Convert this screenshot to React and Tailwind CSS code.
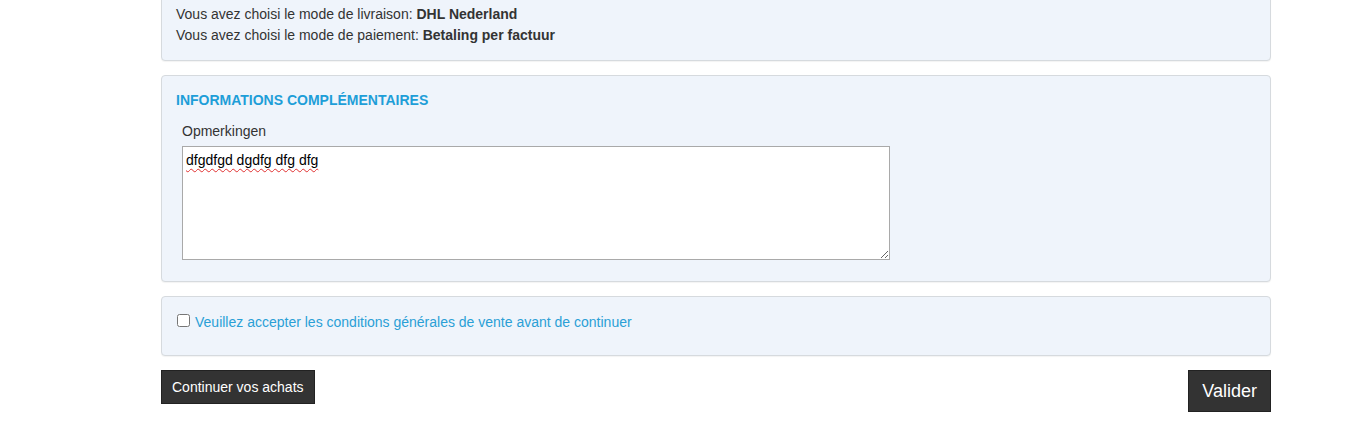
export default function App() {
    return (
        <div className="w-full h-[435px] bg-white overflow-hidden font-['Liberation_Sans',Arial,sans-serif] text-[14px] text-[#333]">
            <div className="ml-[161px] w-[1110px] flex flex-col">
                {/* order summary, top cut off */}
                <div className="-mt-[12px] bg-[#eff4fb] border border-[#d6dade] rounded-[4px] shadow-[0_1px_1px_rgba(0,0,0,0.05)] px-[14px] pt-[15px] pb-[14px] leading-[21px]">
                    <p>Vous avez choisi le mode de livraison: <b>DHL Nederland</b></p>
                    <p>Vous avez choisi le mode de paiement: <b>Betaling per factuur</b></p>
                </div>

                <div className="mt-[14px] bg-[#eff4fb] border border-[#d6dade] rounded-[4px] shadow-[0_1px_1px_rgba(0,0,0,0.05)] px-[14px] pt-[15px] pb-[21px]">
                    <h3 className="text-[14px] leading-[18px] font-bold text-[#1e9ed8] uppercase">Informations complémentaires</h3>
                    <div className="pl-[6px] mt-[12px]">
                        <label className="block leading-[20px]">Opmerkingen</label>
                        <textarea
                            defaultValue="dfgdfgd dgdfg dfg dfg"
                            spellCheck={false}
                            className="mt-[5px] block w-[708px] h-[114px] bg-white border border-[#a9a9a9] px-[3px] py-[3px] text-[14px] leading-[20px] text-black resize-y underline decoration-wavy decoration-[#e03030] decoration-[1px] underline-offset-[3px]"
                        />
                    </div>
                </div>

                <div className="mt-[14px] bg-[#eff4fb] border border-[#d6dade] rounded-[4px] shadow-[0_1px_1px_rgba(0,0,0,0.05)] px-[15px] pt-[15px] pb-[23px]">
                    <label className="flex items-center leading-[20px] text-[#2a9fd6]">
                        <input type="checkbox" className="w-[13px] h-[13px] m-0 mr-[5px] -mt-[4px]" />
                        Veuillez accepter les conditions générales de vente avant de continuer
                    </label>
                </div>

                <div className="mt-[14px] flex items-start justify-between">
                    <button className="bg-[#333] text-white text-[14px] leading-[20px] px-[10px] py-[6px] border border-[#222]">Continuer vos achats</button>
                    <button className="bg-[#333] text-white text-[18px] leading-[26px] px-[13px] py-[7px] border border-[#222]">Valider</button>
                </div>
            </div>
        </div>
    );
}
